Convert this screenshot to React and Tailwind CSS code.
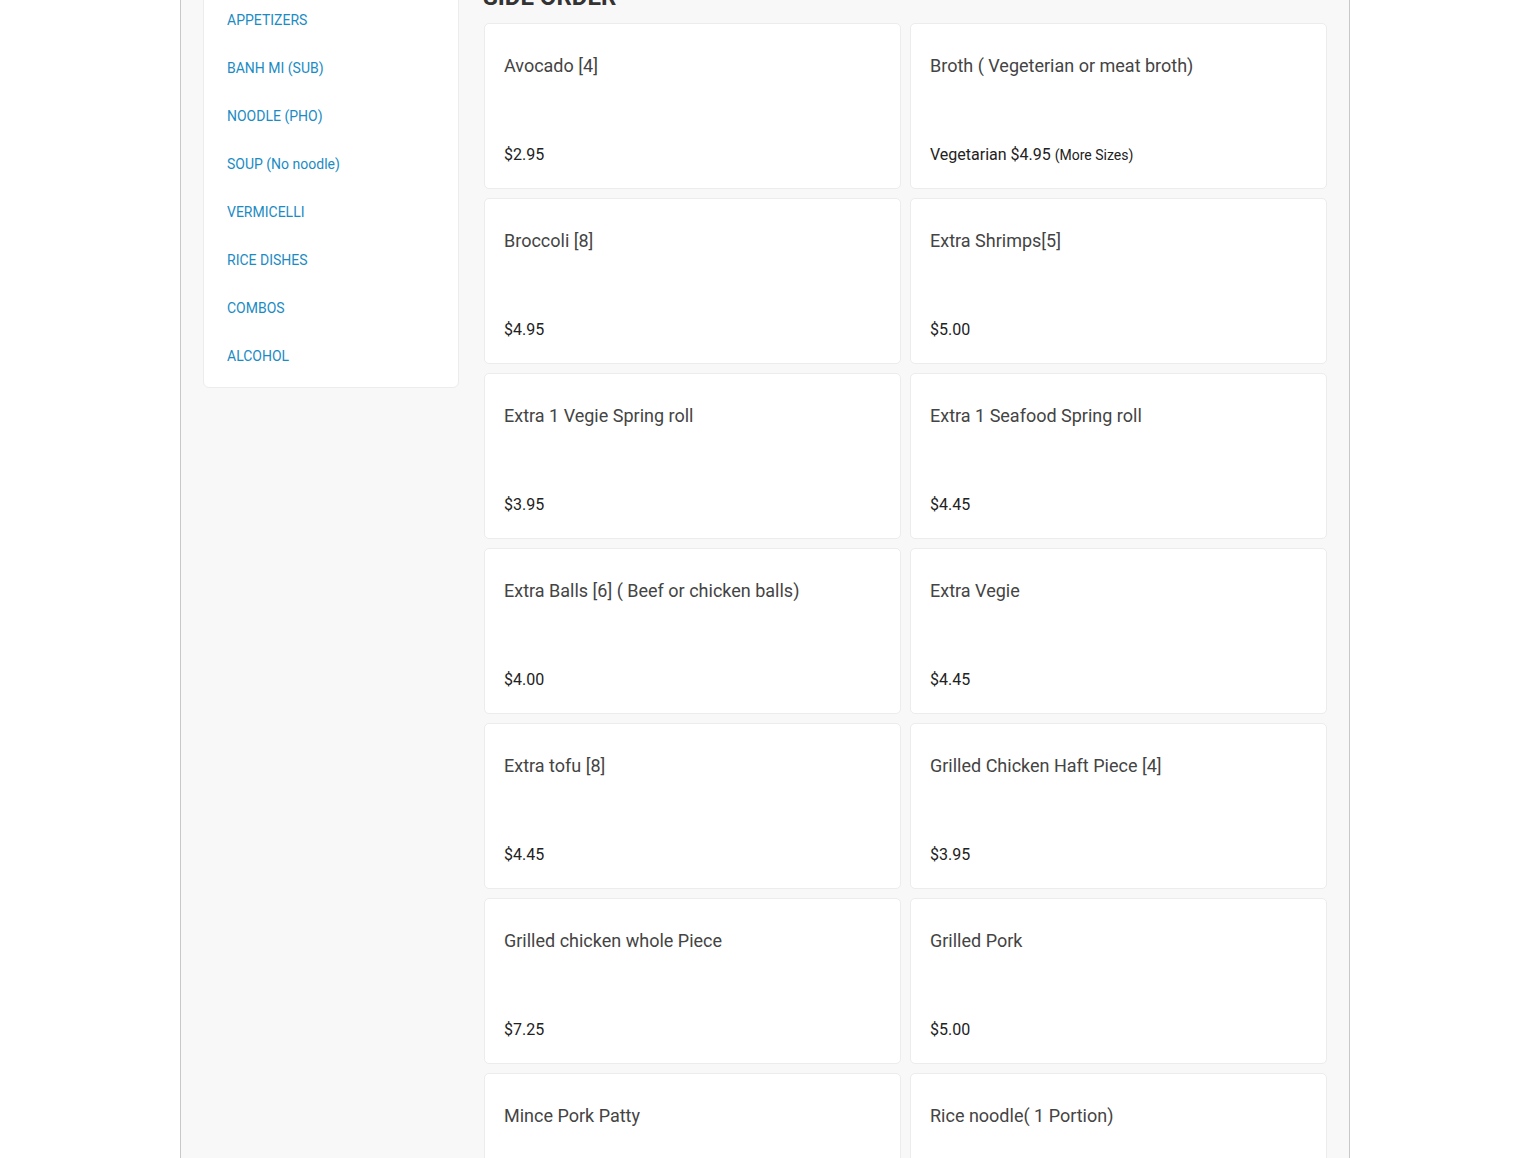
import React from "react";

const cats = ["APPETIZERS","BANH MI (SUB)","NOODLE (PHO)","SOUP (No noodle)","VERMICELLI","RICE DISHES","COMBOS","ALCOHOL"];

const items = [
  ["Avocado [4]", "$2.95"],
  ["Broth ( Vegeterian or meat broth)", null],
  ["Broccoli [8]", "$4.95"],
  ["Extra Shrimps[5]", "$5.00"],
  ["Extra 1 Vegie Spring roll", "$3.95"],
  ["Extra 1 Seafood Spring roll", "$4.45"],
  ["Extra Balls [6] ( Beef or chicken balls)", "$4.00"],
  ["Extra Vegie", "$4.45"],
  ["Extra tofu [8]", "$4.45"],
  ["Grilled Chicken Haft Piece [4]", "$3.95"],
  ["Grilled chicken whole Piece", "$7.25"],
  ["Grilled Pork", "$5.00"],
  ["Mince Pork Patty", "$4.00"],
  ["Rice noodle( 1 Portion)", "$3.00"],
];

export default function App() {
  return (
    <div className="min-h-screen bg-white overflow-hidden" style={{ fontFamily: "Roboto, 'Liberation Sans', sans-serif" }}>
      <div className="mx-auto w-[1170px] min-h-screen border-x border-[#c8c8c8] bg-[#f8f8f8] -mt-[16px] flex pl-[22px]">
        <aside className="w-[256px] shrink-0 mt-[3px] self-start bg-white border border-[#ececec] rounded-[6px] pt-[8px] pb-[7px] pl-[23px]">
          {cats.map((c) => (
            <div key={c} className="py-[14px] text-[14px] leading-[20px] text-[#1b8bc4]">{c}</div>
          ))}
        </aside>
        <main className="ml-[24px] w-[844px]">
          <h2 className="text-[24px] leading-[26px] font-bold text-[#333] mb-[13px]">SIDE ORDER</h2>
          <div className="ml-[1px] w-[843px] grid grid-cols-2 gap-x-[9px] gap-y-[9px]">
            {items.map(([t, p]) => (
              <div key={t} className="h-[166px] bg-white border border-[#ececec] rounded-[5px] pt-[28px] pb-[21px] px-[19px] flex flex-col justify-between">
                <div className="text-[18px] leading-[28px] text-[#444]">{t}</div>
                <div className="text-[16px] leading-[24px] text-[#222]">
                  {p ? p : (<>Vegetarian $4.95 <span className="text-[14px]">(More Sizes)</span></>)}
                </div>
              </div>
            ))}
          </div>
        </main>
      </div>
    </div>
  );
}
